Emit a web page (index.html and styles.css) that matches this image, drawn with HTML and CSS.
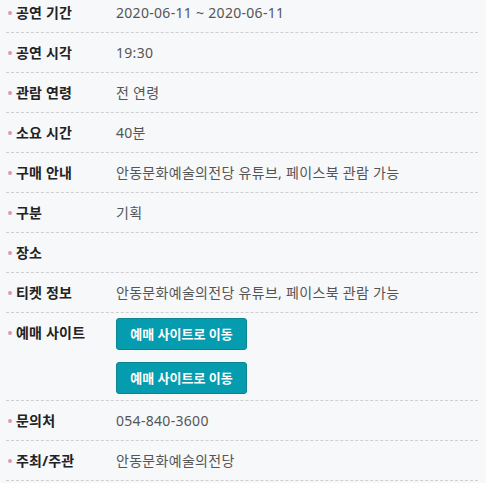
FILE: index.html
```html
<!DOCTYPE html>
<html lang="ko">
<head>
<meta charset="utf-8">
<link rel="stylesheet" href="styles.css">
</head>
<body>
<dl class="info">
  <div class="row"><dt>공연 기간</dt><dd>2020-06-11 ~ 2020-06-11</dd></div>
  <div class="row"><dt>공연 시각</dt><dd>19:30</dd></div>
  <div class="row"><dt>관람 연령</dt><dd>전 연령</dd></div>
  <div class="row"><dt>소요 시간</dt><dd>40분</dd></div>
  <div class="row"><dt>구매 안내</dt><dd>안동문화예술의전당 유튜브, 페이스북 관람 가능</dd></div>
  <div class="row"><dt>구분</dt><dd>기획</dd></div>
  <div class="row"><dt>장소</dt><dd></dd></div>
  <div class="row"><dt>티켓 정보</dt><dd>안동문화예술의전당 유튜브, 페이스북 관람 가능</dd></div>
  <div class="row"><dt>예매 사이트</dt><dd class="links"><a class="btn" href="#">예매 사이트로 이동</a><a class="btn" href="#">예매 사이트로 이동</a></dd></div>
  <div class="row"><dt>문의처</dt><dd>054-840-3600</dd></div>
  <div class="row"><dt>주최/주관</dt><dd>안동문화예술의전당</dd></div>
</dl>
</body>
</html>
```
FILE: styles.css
```css
html, body {
  margin: 0;
  padding: 0;
  background: #f7f8fa;
}
body {
  font-family: "Noto Sans", "Noto Sans CJK KR", sans-serif;
  font-size: 14px;
}
.info {
  margin: -7px 8px 0 6px;
  padding: 0;
}
.row {
  display: flex;
  padding: 5px 0;
  border-bottom: 1px dashed #cfcfd2;
  min-height: 29px;
}
.row dt {
  position: relative;
  width: 100px;
  padding-left: 10px;
  font-weight: bold;
  color: #222;
  line-height: 29px;
  letter-spacing: 0.2px;
}
.row dt::before {
  content: "";
  position: absolute;
  left: 2px;
  top: 13px;
  width: 4px;
  height: 4px;
  border-radius: 50%;
  background: #e394b0;
}
.row dd {
  margin: 0;
  color: #555;
  line-height: 29px;
  letter-spacing: 0.3px;
}
.links {
  display: flex;
  flex-direction: column;
  gap: 12px;
  padding-bottom: 1px;
}
.btn {
  display: flex;
  align-items: center;
  justify-content: center;
  width: 129px;
  height: 30px;
  background: #069caf;
  border: 1px solid #0b8592;
  border-radius: 3px;
  color: #fff;
  font-weight: bold;
  font-size: 13px;
  letter-spacing: 0;
  text-decoration: none;
}
```
